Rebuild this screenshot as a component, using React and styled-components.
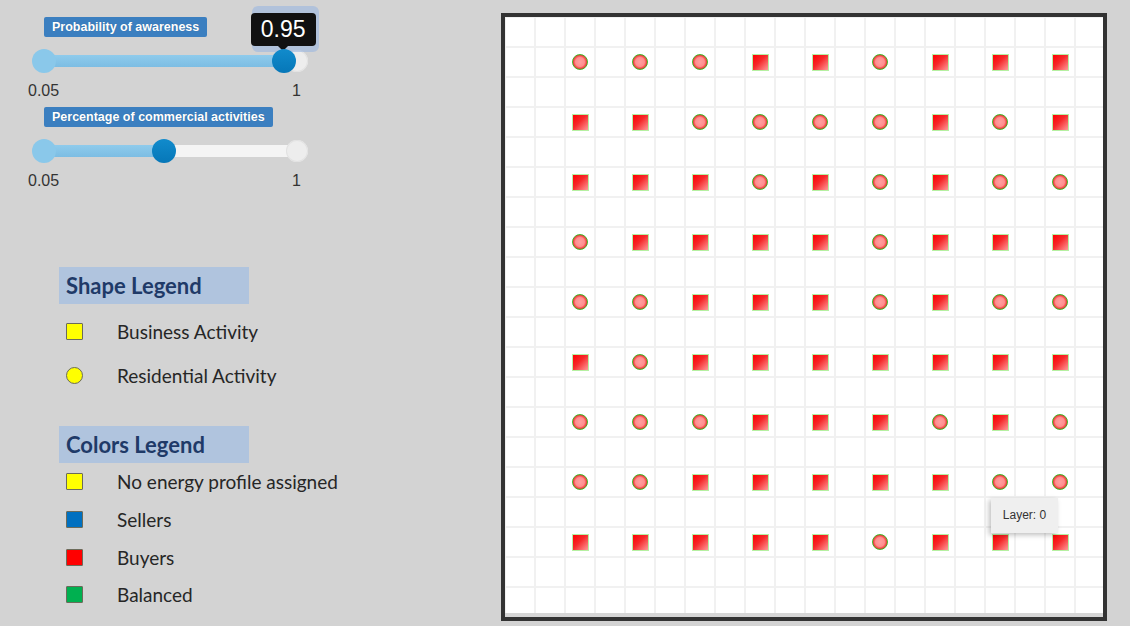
import React from 'react';
import styled, { createGlobalStyle } from 'styled-components';

const MIN = 0.05;
const MAX = 1;
const RAIL = 275;
const KNOB = 24;
const INSET = 11;

const toPx = (v) => INSET + ((v - MIN) / (MAX - MIN)) * (RAIL - 2 * INSET);

// C = residential (circle), S = business (square)
const layout = [
  'CCCSSCSSS',
  'SSCCCCSCS',
  'SSSCSCSCC',
  'CSSSSCSSS',
  'CCSSSCSCC',
  'SCSSSSSSS',
  'CCCSSSCSC',
  'CCSSSSSCC',
  'SSSSSCSSS'
];

const shapeLegend = [
  { label: 'Business Activity', color: '#ffff00', round: false },
  { label: 'Residential Activity', color: '#ffff00', round: true }
];

const colorLegend = [
  { label: 'No energy profile assigned', color: '#ffff00' },
  { label: 'Sellers', color: '#0070c0' },
  { label: 'Buyers', color: '#ff0000' },
  { label: 'Balanced', color: '#00b050' }
];

const Slider = ({ label, value, showTip, first }) => {
  const pos = toPx(value);
  return (
    <SliderBlock $first={first}>
      <Badge>{label}</Badge>
      <TrackRow>
        <Rail>
          <Fill style={{ width: pos }} />
          <EndKnob style={{ left: RAIL - INSET - 11 }} />
          <StartKnob style={{ left: INSET - KNOB / 2 }} />
          {showTip && (
            <>
              <Halo style={{ left: pos - 32 }} />
              <ValueTip style={{ left: pos - 33 }}>{value}</ValueTip>
            </>
          )}
          <Knob style={{ left: pos - KNOB / 2 }} />
        </Rail>
      </TrackRow>
      <TickRow>
        <span>{MIN}</span>
        <span>{MAX}</span>
      </TickRow>
    </SliderBlock>
  );
};

const App = () => (
  <>
    <GlobalStyle />
    <Page>
      <LeftPanel>
        <Slider first label="Probability of awareness" value={0.95} showTip />
        <Slider label="Percentage of commercial activities" value={0.5} />

        <LegendSection $top={77}>
          <LegendHeading>Shape Legend</LegendHeading>
          <LegendList $gap={5}>
            {shapeLegend.map((item) => (
              <LegendItem key={item.label} $h={44}>
                <SwatchCell>
                  <Swatch $color={item.color} $round={item.round} />
                </SwatchCell>
                {item.label}
              </LegendItem>
            ))}
          </LegendList>
        </LegendSection>

        <LegendSection $top={29}>
          <LegendHeading>Colors Legend</LegendHeading>
          <LegendList $gap={0}>
            {colorLegend.map((item) => (
              <LegendItem key={item.label} $h={37.7}>
                <SwatchCell>
                  <Swatch $color={item.color} />
                </SwatchCell>
                {item.label}
              </LegendItem>
            ))}
          </LegendList>
        </LegendSection>
      </LeftPanel>

      <CanvasFrame>
        <GridArea>
          {layout.map((row, r) => row.split('').map((cell, c) => (
            // eslint-disable-next-line react/no-array-index-key
            <Marker key={`${r}-${c}`} $round={cell === 'C'} />
          )))}
          <LayerTip>Layer: 0</LayerTip>
        </GridArea>
        <BottomStrip />
      </CanvasFrame>
    </Page>
  </>
);

export default App;

const GlobalStyle = createGlobalStyle`
html, body {
  margin: 0;
  padding: 0;
}
body {
  background: #d3d3d3;
  font-family: "Liberation Sans", Arial, sans-serif;
}
`;

const Page = styled.div`
display: flex;
align-items: flex-start;
width: 1130px;
height: 626px;
overflow: hidden;
`;

const LeftPanel = styled.div`
width: 501px;
flex-shrink: 0;
padding-top: 17px;
box-sizing: border-box;
`;

const SliderBlock = styled.div`
width: ${RAIL}px;
margin-left: 33px;
margin-top: ${(p) => (p.$first ? 0 : 7)}px;
`;

const Badge = styled.div`
display: inline-block;
margin-left: 11px;
height: 20px;
line-height: 20px;
padding: 0 8px;
border-radius: 2px;
background: #3b7fc0;
color: #fff;
font-size: 12.5px;
font-weight: bold;
text-shadow: 0 0 1px rgba(0, 0, 0, 0.25);
white-space: nowrap;
`;

const TrackRow = styled.div`
height: ${KNOB}px;
margin-top: 12px;
display: flex;
align-items: center;
`;

const Rail = styled.div`
position: relative;
width: 100%;
height: 12px;
border-radius: 6px;
background: #f4f4f4;
`;

const Fill = styled.div`
height: 100%;
border-radius: 6px 0 0 6px;
background: linear-gradient(#8fcbec, #7dbde3);
`;

const knobBase = `
position: absolute;
top: 50%;
border-radius: 50%;
transform: translateY(-50%);
`;

const StartKnob = styled.div`
${knobBase}
width: ${KNOB}px;
height: ${KNOB}px;
background: #8ac8ea;
`;

const EndKnob = styled.div`
${knobBase}
width: 22px;
height: 22px;
background: #ededed;
box-shadow: inset 0 0 0 1px #e2e2e2;
`;

const Knob = styled.div`
${knobBase}
width: ${KNOB}px;
height: ${KNOB}px;
background: linear-gradient(#118bcc, #0677b8);
`;

const Halo = styled.div`
position: absolute;
top: -49px;
width: 67px;
height: 46px;
border-radius: 6px;
background: rgba(150, 180, 225, 0.55);
`;

const ValueTip = styled.div`
position: absolute;
top: -42px;
width: 65px;
height: 33px;
border-radius: 4px;
background: #111;
color: #fff;
font-size: 23px;
line-height: 33px;
text-align: center;

&::after {
  content: '';
  position: absolute;
  left: 50%;
  bottom: -5px;
  margin-left: -5px;
  border-left: 5px solid transparent;
  border-right: 5px solid transparent;
  border-top: 5px solid #111;
}
`;

const TickRow = styled.div`
display: flex;
justify-content: space-between;
margin: 9px 7px 0 -5px;
height: 18px;
line-height: 18px;
font-size: 16px;
color: #333;
`;

const LegendSection = styled.div`
margin-top: ${(p) => p.$top}px;
margin-left: 59px;
font-family: Lato, "Open Sans", sans-serif;
`;

const LegendHeading = styled.div`
width: 190px;
height: 37px;
line-height: 37px;
padding-left: 7px;
box-sizing: border-box;
background: #b0c4de;
color: #1f3a68;
font-size: 22px;
font-weight: bold;
`;

const LegendList = styled.div`
margin-top: ${(p) => p.$gap}px;
`;

const LegendItem = styled.div`
display: flex;
align-items: center;
height: ${(p) => p.$h}px;
padding-left: 7px;
font-size: 19px;
color: #262626;
`;

const SwatchCell = styled.div`
width: 51px;
display: flex;
align-items: center;
`;

const Swatch = styled.div`
width: 17px;
height: 17px;
box-sizing: border-box;
border: 1px solid #6b6b5a;
border-radius: ${(p) => (p.$round ? '50%' : '1px')};
background: ${(p) => p.$color};
`;

const CanvasFrame = styled.div`
margin-top: 13px;
border: 4px solid #333;
width: 598px;
background: #fff;
`;

const GridArea = styled.div`
position: relative;
height: 596px;
box-sizing: border-box;
padding: 15px 0 0 45px;
display: grid;
grid-template-columns: repeat(9, 60px);
grid-auto-rows: 60px;
align-content: start;
place-items: center;
background-color: #fff;
background-image:
  linear-gradient(to right, #f1f1f1 2px, transparent 2px),
  linear-gradient(to bottom, #f1f1f1 2px, transparent 2px);
background-size: 30px 30px;
background-position: -1px -1px;
`;

const Marker = styled.div`
box-sizing: border-box;
width: ${(p) => (p.$round ? 16 : 17)}px;
height: ${(p) => (p.$round ? 16 : 17)}px;
border-radius: ${(p) => (p.$round ? '50%' : '0')};
border: ${(p) => (p.$round ? '1.5px solid #3fb82a' : '1px solid #b6f0a2')};
background: ${(p) => (p.$round
    ? 'radial-gradient(circle, #ffa0a0 0%, #ff8e8e 45%, #f03232 70%, #e01818 100%)'
    : 'linear-gradient(135deg, #ff0000 0%, #f52a2a 45%, #ff9a9a 100%)')};
`;

const LayerTip = styled.div`
position: absolute;
left: 486px;
top: 481px;
width: 67px;
height: 35px;
line-height: 35px;
text-align: center;
background: #efefef;
color: #333;
font-size: 12px;
box-shadow: -2px 2px 5px rgba(0, 0, 0, 0.25);
`;

const BottomStrip = styled.div`
height: 4px;
background: #d6d6d6;
`;
